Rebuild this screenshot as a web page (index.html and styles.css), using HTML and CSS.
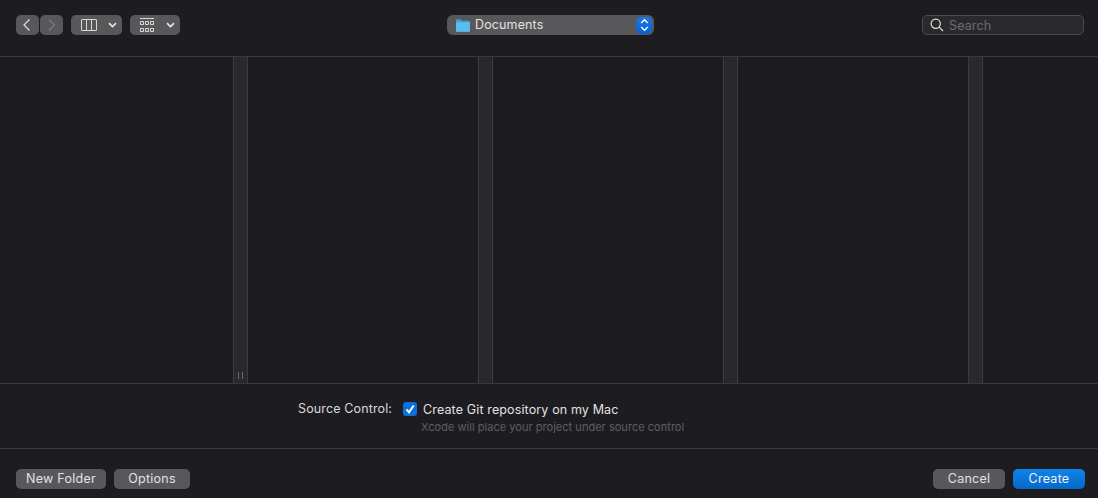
FILE: index.html
```html
<!DOCTYPE html>
<html lang="en">
<head>
<meta charset="utf-8">
<title>Save</title>
<link rel="stylesheet" href="styles.css">
</head>
<body>
<div class="dialog">
  <header class="toolbar">
    <div class="tool-left">
      <div class="nav-group">
        <button class="btn nav"><svg width="10" height="14" viewBox="0 0 10 14"><path d="M6.500 1.500 1 7 6.500 12.500" class="ic"/></svg></button>
        <button class="btn nav"><svg width="10" height="14" viewBox="0 0 10 14"><path d="M2 1.500 7.500 7 2 12.500" class="ic dim"/></svg></button>
      </div>
      <button class="btn view view-col">
        <svg width="16" height="12" viewBox="0 0 16 12"><path d="M1 .5h14a.5.5 0 0 1 .5.5v10a.500.500 0 0 1-.500.500H1a.500.500 0 0 1-.500-.500V1A.500.500 0 0 1 1 .5ZM5.500.5v11M10.500.5v11" class="ic thin"/></svg>
        <svg width="9" height="6" viewBox="0 0 9 6"><path d="M1 1.200 4.500 4.600 8 1.200" class="ic bold"/></svg>
      </button>
      <button class="btn view view-grid">
        <svg width="15" height="15" viewBox="0 0 15 15"><path d="M0 .5h14" class="ic thin dim2"/><path d="M.5 3.500h3v3h-3zM5.500 3.500h3v3h-3zM10.500 3.500h3v3h-3zM.5 10.500h3v3h-3zM5.500 10.500h3v3h-3zM10.500 10.500h3v3h-3z" class="ic thin"/></svg>
        <svg width="9" height="6" viewBox="0 0 9 6"><path d="M1 1.200 4.500 4.600 8 1.200" class="ic bold"/></svg>
      </button>
    </div>
    <div class="location">
      <svg class="folder" width="14" height="13" viewBox="0 0 15 13" preserveAspectRatio="none"><path d="M0 1.500A1.200 1.200 0 0 1 1.200.3h3.600l1.400 1.500h7.600A1.200 1.200 0 0 1 15 3v8.600a1.200 1.200 0 0 1-1.200 1.200H1.200A1.200 1.200 0 0 1 0 11.600Z" fill="#3f9fd8"/><path d="M0 3.300h15v8.300a1.200 1.200 0 0 1-1.200 1.200H1.200A1.200 1.200 0 0 1 0 11.600Z" fill="#5cbdec"/></svg>
      <span class="loc-label">Documents</span>
      <span class="stepper"><svg width="9" height="14" viewBox="0 0 9 14"><path d="M1.200 5 4.500 1.800 7.800 5M1.200 9 4.500 12.200 7.800 9" class="ic bold white"/></svg></span>
    </div>
    <div class="search">
      <svg width="14" height="14" viewBox="0 0 14 14"><circle cx="5.700" cy="5.700" r="4.600" class="ic"/><path d="m9.200 9.200 3.800 3.800" class="ic"/></svg>
      <span class="search-text">Search</span>
    </div>
  </header>
  <main class="browser">
    <section class="col"></section>
    <div class="gutter"><span class="grip"></span></div>
    <section class="col"></section>
    <div class="gutter"></div>
    <section class="col"></section>
    <div class="gutter"></div>
    <section class="col"></section>
    <div class="gutter"></div>
    <section class="col last"></section>
  </main>
  <section class="accessory">
    <div class="label">Source Control:</div>
    <div class="option">
      <div class="check-row">
        <span class="checkbox"><svg width="10" height="10" viewBox="0 0 10 10"><path d="M1.500 5.300 4 8.300 8.700 1.500" class="ic check"/></svg></span>
        <span class="check-text">Create Git repository on my Mac</span>
      </div>
      <div class="hint">Xcode will place your project under source control</div>
    </div>
  </section>
  <footer class="footer">
    <div class="foot-group">
      <button class="btn action new-folder">New Folder</button>
      <button class="btn action options">Options</button>
    </div>
    <div class="foot-group">
      <button class="btn action cancel">Cancel</button>
      <button class="btn action primary">Create</button>
    </div>
  </footer>
</div>
</body>
</html>
```
FILE: styles.css
```css
* { box-sizing: border-box; }
html, body { margin: 0; padding: 0; }
body {
  width: 1098px;
  height: 498px;
  overflow: hidden;
  background: #1d1d21;
  font-family: Inter, "Liberation Sans", sans-serif;
  font-size: 12.5px;
  letter-spacing: .13px;
  color: #dcdcdc;
}
.dialog { display: flex; flex-direction: column; height: 498px; }
.ic { fill: none; stroke: #e0e0e0; stroke-width: 1.2; }
.ic.dim { stroke: #7c7c7e; }
.ic.dim2 { stroke: #a0a0a0; }
.ic.thin { stroke-width: 1; stroke: #d8d8d8; }
.ic.bold { stroke-width: 1.700; stroke: #e4e4e4; }
.ic.white { stroke: #fff; stroke-width: 1.400; }
.ic.check { stroke: #fff; stroke-width: 2; }
.btn {
  border: 0;
  padding: 0;
  margin: 0;
  height: 20px;
  border-radius: 5px;
  background: #58585b;
  color: #e2e2e2;
  font: inherit;
  letter-spacing: inherit;
  display: flex;
  align-items: center;
  justify-content: center;
}
.action { padding-bottom: 2px; letter-spacing: .25px; }
.toolbar {
  height: 57px;
  flex: none;
  border-bottom: 1px solid #39393c;
  display: flex;
  align-items: flex-start;
  padding: 15px 14px 0 16px;
}
.tool-left { display: flex; gap: 8px; width: 431px; }
.nav-group { display: flex; gap: 1px; }
.nav { width: 23px; }
.view { justify-content: flex-start; }
.view-col { width: 51px; padding-left: 10px; gap: 11px; }
.view-grid { width: 50px; padding-left: 10px; gap: 11px; }
.location {
  width: 207px;
  height: 20px;
  border-radius: 6px;
  background: #58585b;
  display: flex;
  align-items: center;
  padding: 0 2px 0 9px;
}
.folder { flex: none; margin-right: 5px; }
.loc-label { flex: 1; color: #e2e2e2; padding-bottom: 1px; }
.stepper {
  width: 16px;
  height: 17px;
  border-radius: 5px;
  background: linear-gradient(#1a78e6, #0a5fd0);
  display: flex;
  align-items: center;
  justify-content: center;
}
.search {
  margin-left: auto;
  width: 162px;
  height: 20px;
  border: 1px solid #4b4b4e;
  border-radius: 5px;
  background: #2a2a2d;
  display: flex;
  align-items: center;
  gap: 5px;
  padding-left: 7px;
}
.search-text { color: #6c6c6f; }
.browser {
  height: 327px;
  flex: none;
  border-bottom: 1px solid #39393c;
  display: flex;
}
.col { width: 230px; flex: none; }
.col:first-child { width: 233px; }
.col.last { flex: 1; }
.gutter {
  width: 15px;
  flex: none;
  background: #29292c;
  border-left: 1px solid #3c3c3f;
  border-right: 1px solid #3c3c3f;
  position: relative;
}
.grip {
  position: absolute;
  left: 4px;
  bottom: 4px;
  width: 5px;
  height: 7px;
  border-left: 1px solid #6a6a6c;
  border-right: 1px solid #6a6a6c;
}
.accessory {
  height: 65px;
  flex: none;
  border-bottom: 1px solid #39393c;
  display: flex;
  padding: 17px 0 0 298px;
  gap: 11px;
}
.label { color: #d8d8d8; line-height: 15px; }
.check-row { display: flex; align-items: center; gap: 6px; height: 14px; margin-top: 1px; }
.checkbox {
  width: 14px;
  height: 14px;
  border-radius: 3px;
  background: #0a6fdc;
  display: flex;
  align-items: center;
  justify-content: center;
}
.check-text { color: #e2e2e2; }
.hint {
  margin: 5px 0 0 18px;
  font-size: 11px;
  letter-spacing: .03px;
  line-height: 13px;
  color: #5f5f62;
}
.footer {
  flex: 1;
  display: flex;
  justify-content: space-between;
  padding: 20px 13px 0 16px;
}
.foot-group { display: flex; gap: 8px; }
.new-folder { width: 90px; }
.options { width: 76px; }
.cancel { width: 72px; }
.primary { width: 72px; background: linear-gradient(#0f84e8, #0668c8); color: #f2f2f2; }
```
